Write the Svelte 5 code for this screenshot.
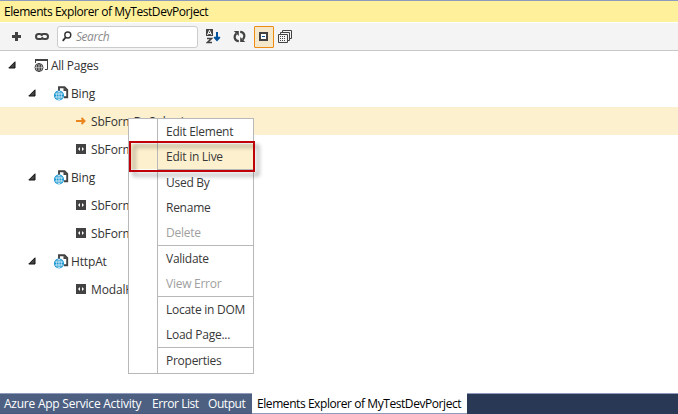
<script>
  const rows = [
    { level: 0, icon: 'pages', label: 'All Pages' },
    { level: 1, icon: 'page', label: 'Bing' },
    { level: 2, icon: 'arrow', label: 'SbFormDoSubmi', selected: true },
    { level: 2, icon: 'element', label: 'SbForm' },
    { level: 1, icon: 'page', label: 'Bing' },
    { level: 2, icon: 'element', label: 'SbForm' },
    { level: 2, icon: 'element', label: 'SbForm' },
    { level: 1, icon: 'page', label: 'HttpAt' },
    { level: 2, icon: 'element', label: 'ModalH' }
  ];
  const groups = [
    [{ t: 'Edit Element' }, { t: 'Edit in Live', hot: true }],
    [{ t: 'Used By' }, { t: 'Rename' }, { t: 'Delete', off: true }],
    [{ t: 'Validate' }, { t: 'View Error', off: true }],
    [{ t: 'Locate in DOM' }, { t: 'Load Page...' }],
    [{ t: 'Properties' }]
  ];
</script>

<div class="window">
  <header>Elements Explorer of MyTestDevPorject</header>
  <div class="toolbar">
    <svg class="plus" width="9" height="9" viewBox="0 0 9 9"><path d="M4.500 0v9M0 4.500h9" stroke="#424242" stroke-width="3" /></svg>
    <svg class="link" width="14" height="7" viewBox="0 0 14 7" fill="none" stroke="#424242" stroke-width="2"><path d="M8 5.200Q7 6 5.500 6H3.500a2.500 2.500 0 0 1 0-5H5.200Q6.300 1 7 3M6 1.800Q7 1 8.500 1h2a2.500 2.500 0 0 1 0 5H8.800Q7.700 6 7 4" /></svg>
    <div class="search">
      <svg width="10" height="11" viewBox="0 0 10 11" fill="none" stroke="#333"><circle cx="5.800" cy="4" r="3" stroke-width="1.400" /><path d="M3.700 6.300 .7 9.800" stroke-width="1.800" /></svg>
      <span>Search</span>
    </div>
    <svg class="sort" width="15" height="15" viewBox="0 0 15 15" fill="none"><path d="M0 0h7v7H0z" fill="#424242" /><path d="M1.500 6 3.500 1.200 5.500 6M2.300 4.500h2.400" stroke="#fff" /><path d="M1 9.500h4.500L1.500 13.500H6" stroke="#424242" stroke-width="1.600" /><path d="M11 3v8M8.300 8 11 11l2.700-3" stroke="#00539c" stroke-width="2" /></svg>
    <svg class="sync" width="13" height="13" viewBox="0 0 13 13" fill="none"><path d="M5.800 11.200C1.500 11 .5 6.500 3.200 3.500M7.200 1.800C11.500 2 12.500 6.500 9.800 9.500" stroke="#424242" stroke-width="2.200" /><path d="M.8 1h5v5zM12.200 12h-5V7z" fill="#424242" /></svg>
    <div class="toggle"><svg width="9" height="9" viewBox="0 0 9 9"><path d="M1 1h7v7H1z" fill="#fff" stroke="#424242" stroke-width="2" /><path d="M3 4.500h3" stroke="#00539c" /></svg></div>
    <svg class="stack" width="14" height="13" viewBox="0 0 14 13" fill="none" stroke="#424242"><path d="M.5 4.500h9v8h-9zM2.500 4.500v-2h9v8h-2M4.500 2.500v-2h9v8h-2" /><path d="M2 6.500h6M2 8.500h6M2 10.500h6" stroke-dasharray="1 1" /></svg>
  </div>

  <main>
    {#each rows as row}
      <div class="row level{row.level}" class:selected={row.selected}>
        {#if row.level < 2}
          <svg class="expander" width="8" height="8" viewBox="0 0 8 8"><path d="M7 .8v6.200H.8z" fill="#444" stroke="#111" /></svg>
        {/if}
        {#if row.icon === 'pages'}
          <svg class="icon" width="15" height="15" viewBox="0 0 15 15" fill="none" stroke="#424242"><path d="M1.500 5V1.500h12v10H11" /><path d="M1 2h13" stroke-width="2" /><circle cx="5" cy="9.500" r="4" fill="#fff" /><ellipse cx="5" cy="9.500" rx="1.800" ry="4" /><path d="M1 8h8M1 11h8M5 5.500v8" stroke-width=".8" /></svg>
        {:else if row.icon === 'page'}
          <svg class="icon" width="15" height="15" viewBox="0 0 15 15" fill="none"><path d="M5 5V1.200h5.500L13.200 4v7.200H10" stroke="#424242" stroke-width="1.900" /><path d="M9.500 1v4H13z" fill="#424242" /><circle cx="5" cy="9.500" r="5" fill="#1695d1" /><path d="M1 8h8M1 11h8M5 5v9" stroke="#fff" stroke-width=".7" /><ellipse cx="5" cy="9.500" rx="2.400" ry="4.300" stroke="#fff" stroke-width=".6" /></svg>
        {:else if row.icon === 'arrow'}
          <svg class="icon" width="10" height="10" viewBox="0 0 10 10" fill="none" stroke="#e9851e" stroke-width="2"><path d="M0 5h8M5.500 2 8.500 5l-3 3" /></svg>
        {:else}
          <svg class="icon" width="10" height="10" viewBox="0 0 10 10"><path d="M0 0h10v10H0z" fill="#424242" /><path d="M4 3v4L2 5zM6 3v4l2-2z" fill="#fff" /></svg>
        {/if}
        <span>{row.label}</span>
      </div>
    {/each}
  </main>

  <footer>
    <span class="azure">Azure App Service Activity</span>
    <span class="errors">Error List</span>
    <span class="output">Output</span>
    <span class="active">Elements Explorer of MyTestDevPorject</span>
  </footer>

  <div class="menu">
    {#each groups as group}
      <div class="group">
        {#each group as item}
          <div class="item" class:hot={item.hot} class:off={item.off}><i></i><span>{item.t}</span></div>
        {/each}
      </div>
    {/each}
  </div>
  <div class="callout"></div>
</div>

<style>
  .window { position: relative; display: flex; flex-direction: column; width: 678px; height: 414px; overflow: hidden; box-sizing: border-box; background: #fff; border-top: 1px solid #8e9bbc; font: 12px "Open Sans", "Noto Sans", sans-serif; color: #1e1e1e; white-space: nowrap; }
  svg { display: block; flex: none; }
  header { height: 21px; line-height: 21px; padding-left: 4px; background: #fff09c; letter-spacing: -.43px; color: #000; }
  .toolbar { margin-top: 1px; height: 27px; display: flex; align-items: center; background: #f4f4f4; border-bottom: 1px solid #c8c8c8; }
  .plus { margin-left: 12px; }
  .link { margin-left: 14px; }
  .search { margin-left: 8px; width: 141px; height: 22px; box-sizing: border-box; border: 1px solid #ccc; border-radius: 3px; background: #fff; display: flex; align-items: center; padding-left: 4px; font-style: italic; color: #8c8c8c; letter-spacing: -.45px; }
  .search span { margin-left: 4px; }
  .sort { margin-left: 8px; }
  .sync { margin-left: 12px; }
  .toggle { margin-left: 8px; width: 20px; height: 22px; box-sizing: border-box; border: 1px solid #ed8b13; background: #f5e7c9; border-radius: 1px; padding: 5px 0 0 4px; }
  .stack { margin-left: 4px; }
  main { flex: 1; }
  .row { height: 28px; display: flex; align-items: center; letter-spacing: -.15px; color: #333; }
  .level0 { letter-spacing: -.25px; }
  .selected { background: #fdf0cf; }
  .level0 { padding-left: 8px; }
  .level1 { padding-left: 28px; }
  .level2 { padding-left: 76px; }
  .level0 .icon, .level1 .icon { margin-left: 18px; }
  .row span { margin-left: 2px; }
  .level2 span { margin-left: 5px; }
  footer { height: 21px; box-sizing: border-box; border-top: 1px solid #8e9bbc; background: #293955; display: flex; line-height: 19px; color: #fff; letter-spacing: -.43px; }
  footer span { box-sizing: border-box; background: #4d6082; border-bottom: 1px solid #465a7d; }
  .azure { width: 148px; padding-left: 4px; letter-spacing: -.24px; }
  .errors { width: 56px; padding-left: 4px; }
  .output { width: 48px; padding-left: 4px; }
  .active { width: 215px; padding-left: 5px; background: #fff; color: #000; border-bottom-color: #8e9bbc; margin-top: -1px; padding-top: 1px; }
  .menu { position: absolute; left: 128px; top: 117px; width: 126px; box-sizing: border-box; border: 1px solid #b8b8b8; background: #fff; letter-spacing: -.26px; color: #383838; }
  .item { display: flex; height: 25px; line-height: 25px; }
  .item i { width: 28px; border-right: 1px solid #b8b8b8; }
  .item span { flex: 1; padding-left: 8px; }
  .group + .group .item:first-child { height: 26px; }
  .group + .group .item:first-child span { border-top: 1px solid #b8b8b8; }
  .hot { background: #fdf0cf; }
  .off { color: #a0a0a0; }
  .callout { position: absolute; left: 129px; top: 140px; width: 126px; height: 31px; box-sizing: border-box; border: 2px solid #c00008; filter: drop-shadow(4px 4px 2px rgba(0, 0, 0, .4)); }
</style>
